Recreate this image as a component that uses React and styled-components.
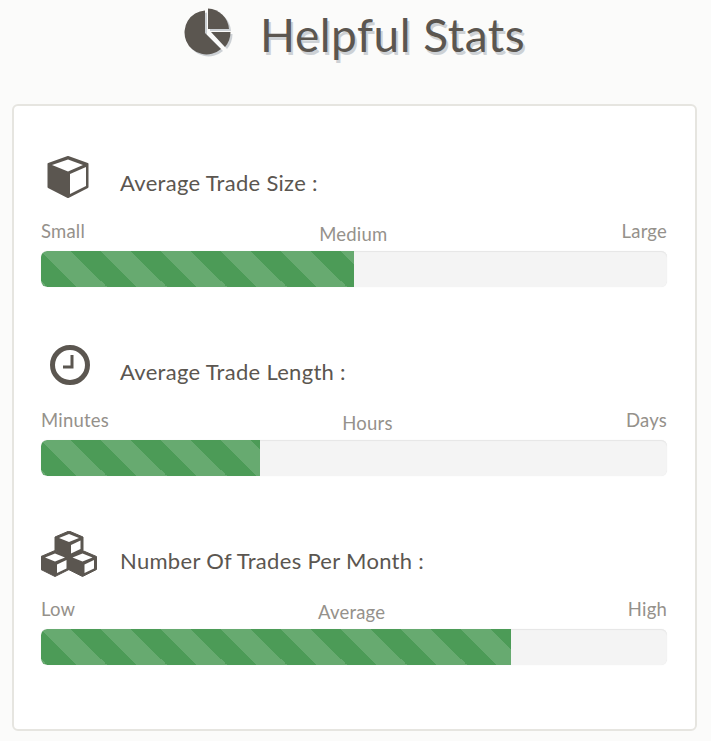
import React from 'react';
import styled, { createGlobalStyle } from 'styled-components';

const GlobalStyle = createGlobalStyle`
    html, body {
        margin: 0;
        background: #fbfbfa;
        font-family: 'Lato', 'Liberation Sans', sans-serif;
    }
`;

const Page = styled.div`
    width: 711px;
    height: 741px;
    overflow: hidden;
    box-sizing: border-box;
    padding: 0 14px 0 12px;
`;

const Header = styled.header`
    height: 104px;
    display: flex;
    align-items: flex-start;
    padding: 7px 0 0 171px;
    box-sizing: border-box;
    gap: 27px;
`;

const PieIcon = styled.svg`
    width: 50px;
    height: 50px;
    flex: none;
    filter: drop-shadow(2px 2px 0 #ccd0d4);
`;

const Title = styled.h1`
    margin: 0;
    font-size: 46px;
    line-height: 56px;
    font-weight: 400;
    letter-spacing: 0.5px;
    color: #5b5650;
    text-shadow: 2px 3px 0 #cdd1d5;
`;

const Card = styled.section`
    box-sizing: border-box;
    height: 627px;
    background: #fff;
    border: 2px solid #e6e5e0;
    border-radius: 6px;
    padding: 40px 28px 15px 27px;
`;

const Stat = styled.div`
    margin-bottom: 48px;
`;

const StatHead = styled.div`
    height: 70px;
    display: grid;
    grid-template-columns: 79px 1fr;
`;

const IconBox = styled.div`
    display: flex;
    align-items: flex-start;
    padding: ${props => props.$top}px 0 0 ${props => props.$left}px;
`;

const StatTitle = styled.h2`
    margin: 0;
    padding-top: 24px;
    font-size: 22px;
    line-height: 26px;
    font-weight: 400;
    letter-spacing: 0.3px;
    color: #5b5650;
`;

const Scale = styled.div`
    height: 35px;
    display: flex;
    justify-content: space-between;
    align-items: flex-start;
`;

const ScaleLabel = styled.span`
    font-size: 18.5px;
    line-height: 22px;
    letter-spacing: 0.2px;
    color: #95918b;
    margin-top: ${props => props.$mid ? '7px' : '4px'};
`;

const Track = styled.div`
    height: 36px;
    background: #f4f4f4;
    border-radius: 6px;
    box-shadow: inset 0 1px 1px #e6e6e6, 0 0 1px #e6e6e6;
    overflow: hidden;
`;

const Fill = styled.div`
    height: 100%;
    background-color: #4c9b57;
    background-image: linear-gradient(
        45deg,
        rgba(255,255,255,.15) 25%,
        transparent 25%,
        transparent 50%,
        rgba(255,255,255,.15) 50%,
        rgba(255,255,255,.15) 75%,
        transparent 75%,
        transparent
    );
    background-size: 60px 60px;
    border-radius: 6px 0 0 6px;
`;

const DARK = '#5b5650';

const stats = [
    { title: 'Average Trade Size :', labels: ['Small', 'Medium', 'Large'], pct: 50, icon: 'cube' },
    { title: 'Average Trade Length :', labels: ['Minutes', 'Hours', 'Days'], pct: 35, icon: 'clock' },
    { title: 'Number Of Trades Per Month :', labels: ['Low', 'Average', 'High'], pct: 75, icon: 'cubes' },
];

function SmallCube({ x, y }) {
    return (
        <g transform={`translate(${x} ${y})`}>
            <path d="M14 0 L28 6 L28 19 L14 26 L0 19 L0 6 Z" fill={DARK} stroke={DARK} strokeWidth="1" strokeLinejoin="round" />
            <path d="M14 3 L24 7 L14 11 L4 7 Z" fill="#fff" />
            <path d="M16 14 L25.5 9.5 L25.5 18 L16 22.5 Z" fill="#fff" />
        </g>
    );
}

function StatIcon({ name }) {
    if (name === 'cube') {
        return (
            <IconBox $top={10} $left={6}>
                <svg width="42" height="42" viewBox="0 0 42 42">
                    <path d="M21 1 L40.5 8 L40.5 31 L21 41 L1.5 31 L1.5 8 Z" fill={DARK} stroke={DARK} strokeWidth="2" strokeLinejoin="round" />
                    <path d="M21 3.5 L36 9 L21 15.5 L5 9 Z" fill="#fff" />
                    <path d="M23 18 L39 11 L39 30 L23 38 Z" fill="#fff" />
                </svg>
            </IconBox>
        );
    }
    if (name === 'clock') {
        return (
            <IconBox $top={9} $left={8}>
                <svg width="42" height="42" viewBox="0 0 42 42">
                    <circle cx="21" cy="21" r="17.5" fill="none" stroke={DARK} strokeWidth="5" />
                    <path d="M23 11 V23 H14" fill="none" stroke={DARK} strokeWidth="3" />
                </svg>
            </IconBox>
        );
    }
    return (
        <IconBox $top={7} $left={0}>
            <svg width="56" height="46" viewBox="0 0 56 46">
                <SmallCube x={14} y={0} />
                <SmallCube x={0} y={19.5} />
                <SmallCube x={27.5} y={19.5} />
            </svg>
        </IconBox>
    );
}

export default function App() {
    return (
        <>
            <GlobalStyle />
            <Page>
                <Header>
                    <PieIcon viewBox="0 0 50 50">
                        <path d="M22 3.5 V26 L38 42 A22 22 0 1 1 22 3.5 Z" fill={DARK} />
                        <path d="M25 1.5 A22 22 0 0 1 46 22 H25 Z" fill={DARK} />
                        <path d="M28 25 H47.5 A23 23 0 0 1 42 40 Z" fill={DARK} />
                    </PieIcon>
                    <Title>Helpful Stats</Title>
                </Header>
                <Card>
                    {stats.map(stat => (
                        <Stat key={stat.title}>
                            <StatHead>
                                <StatIcon name={stat.icon} />
                                <StatTitle>{stat.title}</StatTitle>
                            </StatHead>
                            <Scale>
                                <ScaleLabel>{stat.labels[0]}</ScaleLabel>
                                <ScaleLabel $mid>{stat.labels[1]}</ScaleLabel>
                                <ScaleLabel>{stat.labels[2]}</ScaleLabel>
                            </Scale>
                            <Track>
                                <Fill style={{ width: `${stat.pct}%` }} />
                            </Track>
                        </Stat>
                    ))}
                </Card>
            </Page>
        </>
    );
}
